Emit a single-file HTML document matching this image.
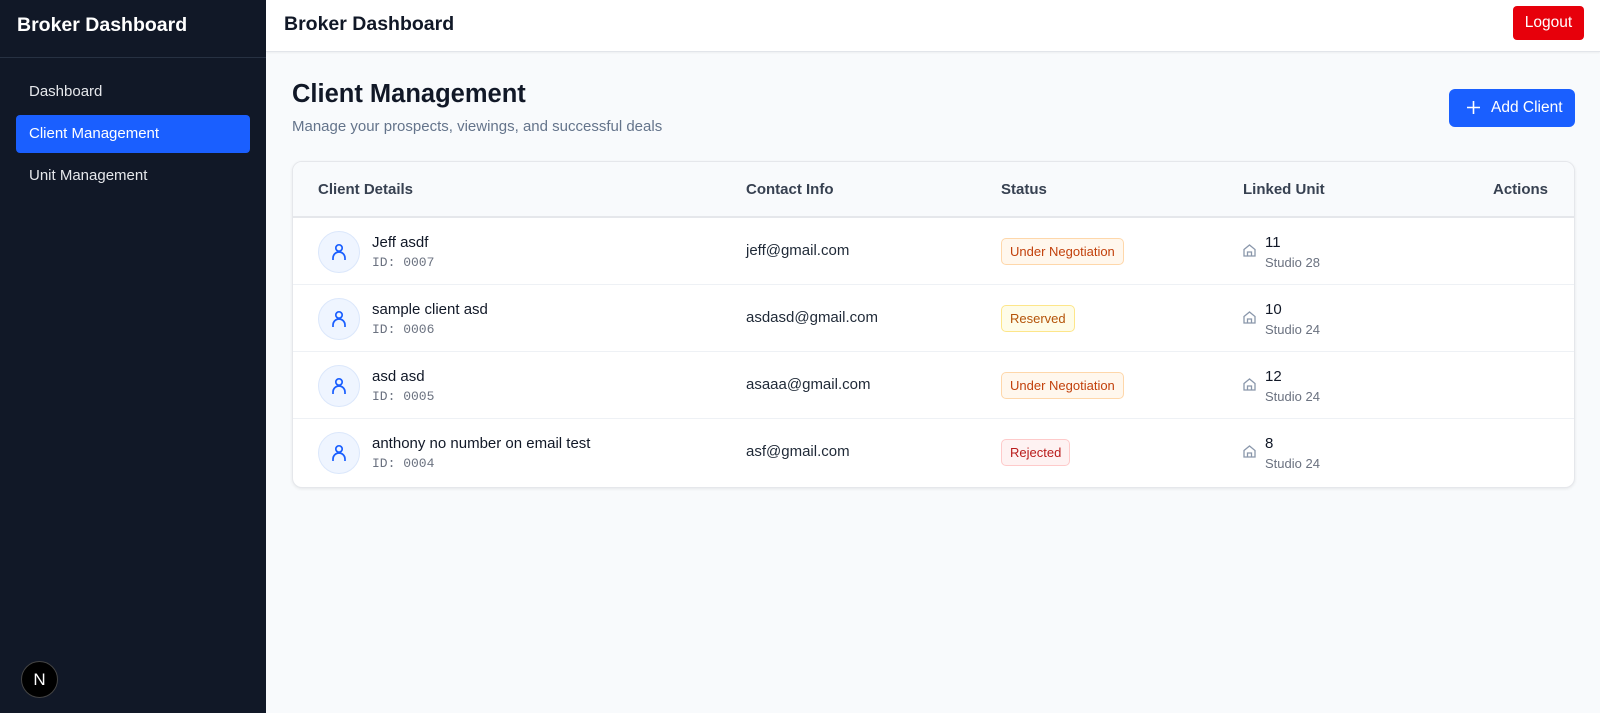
<!DOCTYPE html>
<html><head><style>
*{box-sizing:border-box;margin:0;padding:0}
body{width:1600px;height:713px;font-family:"Liberation Sans",sans-serif;background:#f8fafc;position:relative;overflow:hidden}
.sb{position:absolute;left:0;top:0;width:266px;height:713px;background:#111827}
.sb h1{font-size:19.5px;color:#fff;font-weight:bold;position:absolute;left:17px;top:14px}
.sb .line{position:absolute;top:57px;left:0;right:0;border-top:1px solid #273142}
.nav{position:absolute;left:16px;width:234px;height:38px;color:#e5e7eb;font-size:15px;line-height:38px;padding-left:13px;border-radius:4px}
.nav.a{background:#1a5fff;color:#fff}
.nx{position:absolute;left:21px;top:661px;width:37px;height:37px;border-radius:50%;background:#000;border:1px solid #444;color:#fff;font-size:17px;text-align:center;line-height:35px}
.hd{position:absolute;left:266px;top:0;right:0;height:52px;background:#fff;border-bottom:1px solid #e2e5ea;box-shadow:0 1px 2px rgba(0,0,0,.05)}
.hd h2{position:absolute;left:18px;top:13px;font-size:19.5px;color:#111827}
.lo{position:absolute;right:16px;top:6px;width:71px;height:34px;background:#e7000b;color:#fff;border-radius:4px;font-size:15.5px;text-align:center;line-height:34px}
.t1{position:absolute;left:292px;top:80px;font-size:25.5px;font-weight:bold;color:#111827}
.t2{position:absolute;left:292px;top:118px;font-size:15px;color:#64748b}
.add{position:absolute;left:1449px;top:89px;width:126px;height:38px;background:#1a5fff;border-radius:6px;color:#fff;font-size:15.5px;line-height:38px;padding-left:42px}
.add svg{position:absolute;left:18px;top:12px}
.card{position:absolute;left:292px;top:161px;width:1283px;height:327px;background:#fff;border:1px solid #e5e7eb;border-radius:10px;box-shadow:0 1px 3px rgba(0,0,0,.08);overflow:hidden}
.th{height:56px;background:#f8fafc;border-bottom:2px solid #e5e7eb;position:relative;font-size:15px;font-weight:bold;color:#374151}
.th span,.r span,.r div{position:absolute}
.th span{top:19px}
.r{height:67px;border-bottom:1px solid #eef1f5;position:relative}
.r:last-child{border-bottom:none}
.av{left:25px;top:13px;width:42px;height:42px;border-radius:50%;background:#eff5ff;border:1px solid #dbe7fb}
.av svg{position:absolute;left:12px;top:11px}
.nm{left:79px;top:16px;font-size:15px;color:#111827}
.id{left:79px;top:37px;font-size:13px;color:#6b7280;font-family:"Liberation Mono",monospace}
.em{left:453px;top:24px;font-size:15px;color:#1f2937}
.bd{left:708px;top:20px;height:27px;line-height:25px;font-size:13px;padding:0 8px;border-radius:5px;border:1px solid}
.un{background:#fff7ed;border-color:#fed7aa;color:#c2410c}
.rs{background:#fefce8;border-color:#fde68a;color:#b45309}
.rj{background:#fef2f2;border-color:#fecaca;color:#b91c1c}
.hi{left:950px;top:26px}
.u1{left:972px;top:16px;font-size:15px;color:#111827}
.u2{left:972px;top:37px;font-size:13px;color:#6b7280}
</style></head><body>
<div class="sb"><h1>Broker Dashboard</h1><div class="line"></div>
<div class="nav" style="top:73px">Dashboard</div>
<div class="nav a" style="top:115px">Client Management</div>
<div class="nav" style="top:157px">Unit Management</div>
<div class="nx">N</div></div>
<div class="hd"><h2>Broker Dashboard</h2><div class="lo">Logout</div></div>
<div class="t1">Client Management</div>
<div class="t2">Manage your prospects, viewings, and successful deals</div>
<div class="add"><svg width="13" height="13" viewBox="0 0 13 13"><path d="M6.5 0v13M0 6.5h13" stroke="#fff" stroke-width="1.6"/></svg>Add Client</div>
<div class="card">
<div class="th"><span style="left:25px">Client Details</span><span style="left:453px">Contact Info</span><span style="left:708px">Status</span><span style="left:950px">Linked Unit</span><span style="right:26px">Actions</span></div>
<div class="r"><div class="av"><svg width="16" height="18" viewBox="0 0 16 18" fill="none" stroke="#1a5fff" stroke-width="1.7"><circle cx="8" cy="5" r="3.2"/><path d="M2 17v-2a5 5 0 0 1 12 0v2"/></svg></div><span class="nm">Jeff asdf</span><span class="id">ID: 0007</span><span class="em">jeff@gmail.com</span><span class="bd un">Under Negotiation</span><svg class="hi" style="position:absolute" width="13" height="13" viewBox="0 0 13 13" fill="none" stroke="#8a97ab" stroke-width="1.3"><path d="M1 5.5L6.5 1 12 5.5V12H1z"/><path d="M4.5 12V8h4v4"/></svg><span class="u1">11</span><span class="u2">Studio 28</span></div>
<div class="r"><div class="av"><svg width="16" height="18" viewBox="0 0 16 18" fill="none" stroke="#1a5fff" stroke-width="1.7"><circle cx="8" cy="5" r="3.2"/><path d="M2 17v-2a5 5 0 0 1 12 0v2"/></svg></div><span class="nm">sample client asd</span><span class="id">ID: 0006</span><span class="em">asdasd@gmail.com</span><span class="bd rs">Reserved</span><svg class="hi" style="position:absolute" width="13" height="13" viewBox="0 0 13 13" fill="none" stroke="#8a97ab" stroke-width="1.3"><path d="M1 5.5L6.5 1 12 5.5V12H1z"/><path d="M4.5 12V8h4v4"/></svg><span class="u1">10</span><span class="u2">Studio 24</span></div>
<div class="r"><div class="av"><svg width="16" height="18" viewBox="0 0 16 18" fill="none" stroke="#1a5fff" stroke-width="1.7"><circle cx="8" cy="5" r="3.2"/><path d="M2 17v-2a5 5 0 0 1 12 0v2"/></svg></div><span class="nm">asd asd</span><span class="id">ID: 0005</span><span class="em">asaaa@gmail.com</span><span class="bd un">Under Negotiation</span><svg class="hi" style="position:absolute" width="13" height="13" viewBox="0 0 13 13" fill="none" stroke="#8a97ab" stroke-width="1.3"><path d="M1 5.5L6.5 1 12 5.5V12H1z"/><path d="M4.5 12V8h4v4"/></svg><span class="u1">12</span><span class="u2">Studio 24</span></div>
<div class="r"><div class="av"><svg width="16" height="18" viewBox="0 0 16 18" fill="none" stroke="#1a5fff" stroke-width="1.7"><circle cx="8" cy="5" r="3.2"/><path d="M2 17v-2a5 5 0 0 1 12 0v2"/></svg></div><span class="nm">anthony no number on email test</span><span class="id">ID: 0004</span><span class="em">asf@gmail.com</span><span class="bd rj">Rejected</span><svg class="hi" style="position:absolute" width="13" height="13" viewBox="0 0 13 13" fill="none" stroke="#8a97ab" stroke-width="1.3"><path d="M1 5.5L6.5 1 12 5.5V12H1z"/><path d="M4.5 12V8h4v4"/></svg><span class="u1">8</span><span class="u2">Studio 24</span></div>
</div>
</body></html>
